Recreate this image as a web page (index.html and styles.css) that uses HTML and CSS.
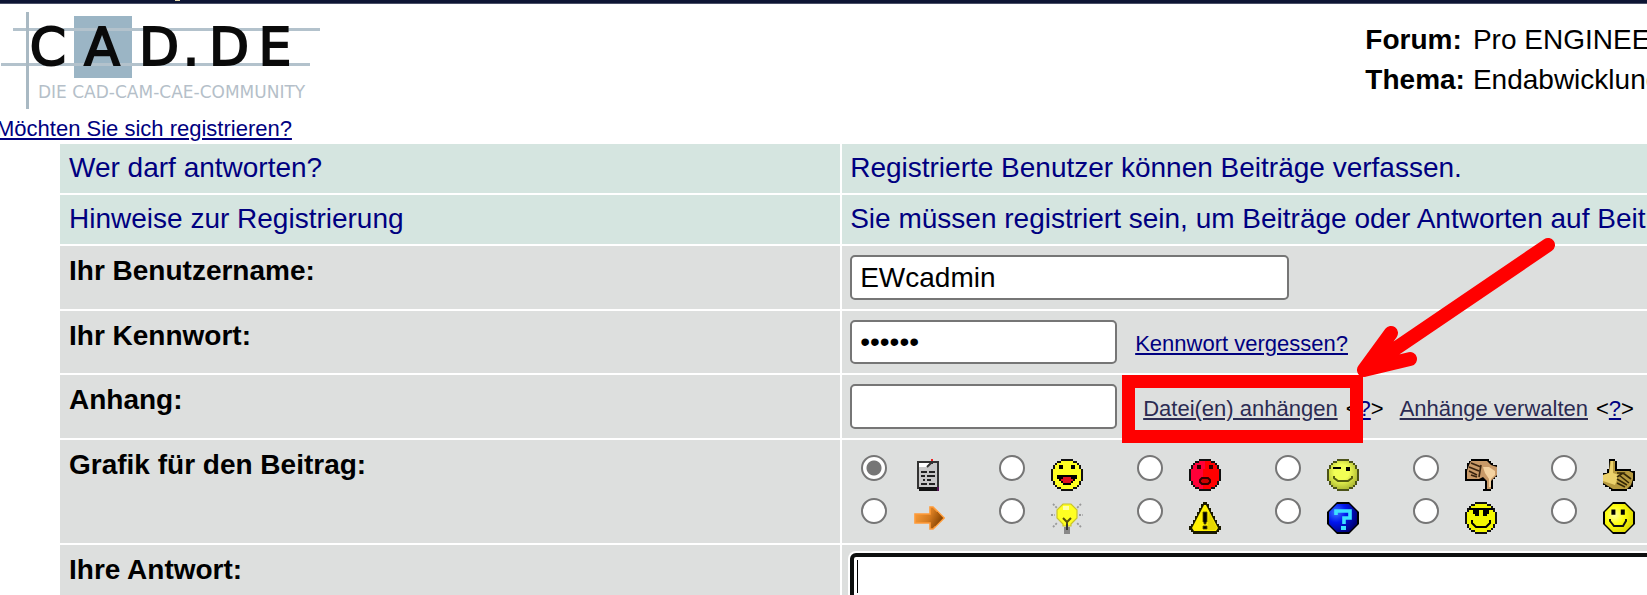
FILE: index.html
```
<!DOCTYPE html>
<html lang="de">
<head>
    <meta charset="UTF-8">
    <title>CAD.DE</title>
    <link rel="stylesheet" href="styles.css">
</head>
<body>
    <div class="topbar"></div>

    <header class="header">
        <svg class="logo" viewBox="0 0 330 112" role="img" aria-label="CAD.DE">
            <rect x="74" y="12" width="58" height="62" fill="#9bb5c5"/>
            <path d="M13 25.500H320M1 60.500H310" stroke="#b3c2cc" stroke-width="3"/>
            <path d="M27.500 8V105" stroke="#a9b9c3" stroke-width="3"/>
            <g class="logo-name">
                <text x="48" y="61">C</text>
                <text x="102" y="61">A</text>
                <text x="159" y="61">D</text>
                <text x="191" y="61">.</text>
                <text x="229" y="61">D</text>
                <text x="275" y="61">E</text>
            </g>
            <text class="logo-claim" x="38" y="94">DIE CAD-CAM-CAE-COMMUNITY</text>
        </svg>
        <dl class="thema">
            <dt>Forum:</dt>
            <dd>Pro ENGINEER</dd>
            <dt>Thema:</dt>
            <dd>Endabwicklung</dd>
        </dl>
    </header>

    <p class="registrieren"><a href="#">Möchten Sie sich registrieren?</a></p>

    <form>
    <table class="formular">
        <tr class="info">
            <td class="links">Wer darf antworten?</td>
            <td>Registrierte Benutzer können Beiträge verfassen.</td>
        </tr>
        <tr class="info">
            <td>Hinweise zur Registrierung</td>
            <td>Sie müssen registriert sein, um Beiträge oder Antworten auf Beiträge</td>
        </tr>
        <tr>
            <th><label for="benutzername">Ihr Benutzername:</label></th>
            <td><div class="zeile"><input type="text" id="benutzername" class="feld feld-breit" value="EWcadmin"></div></td>
        </tr>
        <tr>
            <th><label for="kennwort">Ihr Kennwort:</label></th>
            <td>
                <div class="zeile">
                    <input type="password" id="kennwort" class="feld feld-kennwort" value="geheim">
                    <a class="vergessen" href="#">Kennwort vergessen?</a>
                </div>
            </td>
        </tr>
        <tr>
            <th><label for="anhang">Anhang:</label></th>
            <td>
                <div class="zeile">
                    <input type="text" id="anhang" class="feld">
                    <span class="markiert">
                        <a class="datei" href="#">Datei(en) anhängen</a>
                        <span class="rahmen"></span>
                        <svg class="pfeil" viewBox="0 0 200 142">
                            <path d="M191 8L7 133M34 96L7 133L53 122" fill="none" stroke="#f00" stroke-width="14" stroke-linecap="round" stroke-linejoin="round"/>
                            <path d="M7 133L34 96L37 109L42 118L53 122z" fill="#f00"/>
                        </svg>
                    </span>
                    <span>&lt;<a href="#">?</a>&gt;</span>
                    <a class="datei verwalten" href="#">Anhänge verwalten</a>
                    <span>&lt;<a href="#">?</a>&gt;</span>
                </div>
            </td>
        </tr>
        <tr>
            <th>Grafik für den Beitrag:</th>
            <td class="grafik">
                <div class="icons">
                    <label><input type="radio" name="icon" aria-label="Notiz" checked>
                        <svg viewBox="-1 0 16 16">
                            <path d="M1 1h11v14H1z" fill="#333"/>
                            <path d="M2 2h9v12H2z" fill="#c8c8c8"/>
                            <path d="M2 2h5v2H2z" fill="#fff"/>
                            <path d="M3 6.500h3M7 6.500h3M3 8.500h2M6 8.500h4M4 10.500h1M6 10.500h2M3 12.500h3M7 12.500h3" stroke="#222"/>
                            <path d="M6 4l2-2 1 0" stroke="#333" fill="none"/>
                            <path d="M2 14h10v2H2z" fill="#111"/>
                            <path d="M8 0h1v1H8z" fill="#e22"/>
                            <path d="M11 14h1v2h-1z" fill="#515"/>
                        </svg>
                    </label>
                    <label><input type="radio" name="icon" aria-label="Lachen">
                        <svg viewBox="0 0 16 16">
                            <path class="rand" d="M5 0h6v1h2v1h1v1h1v2h1v6h-1v2h-1v1h-1v1h-2v1H5v-1H3v-1H2v-1H1v-2H0V5h1V3h1V2h1V1h2z"/>
                            <path d="M5 1h6v1h2v1h1v2h1v6h-1v2h-1v1h-2v1H5v-1H3v-1H2v-2H1V5h1V3h1V2h2z" fill="#ff2"/>
                            <path d="M4 3h2v2H4zM10 3h2v2h-2zM3 8h10v2h-1v1h-1v1h-1v1H6v-1H5v-1H4v-1H3z"/>
                            <path d="M5 10h1V9h4v1h1v1h-1v1H6v-1H5z" fill="#e01020"/>
                        </svg>
                    </label>
                    <label><input type="radio" name="icon" aria-label="Wütend">
                        <svg viewBox="0 0 16 16">
                            <path class="rand" d="M5 0h6v1h2v1h1v1h1v2h1v6h-1v2h-1v1h-1v1h-2v1H5v-1H3v-1H2v-1H1v-2H0V5h1V3h1V2h1V1h2z"/>
                            <path d="M5 1h6v1h2v1h1v2h1v6h-1v2h-1v1h-2v1H5v-1H3v-1H2v-2H1V5h1V3h1V2h2z" fill="#f00"/>
                            <path d="M5 1h3v4H7v10H5v-1H3v-1H2v-2H1V5h1V3h1V2h2z" fill="#ff0038"/>
                            <path d="M4 3h2v2H4zM10 3h2v2h-2z" fill="#300"/>
                            <path d="M6.500 9.500h3l1 1v1l-1 1h-3l-1-1v-1z" fill="#c00" stroke="#300"/>
                        </svg>
                    </label>
                    <label><input type="radio" name="icon" aria-label="Zwinkern">
                        <svg viewBox="0 0 16 16">
                            <defs>
                                <radialGradient id="zwinkern" cx=".45" cy=".4" r=".65">
                                    <stop offset=".4" stop-color="#f2ff55"/>
                                    <stop offset="1" stop-color="#a8b430"/>
                                </radialGradient>
                            </defs>
                            <path d="M5 0h6v1h2v1h1v1h1v2h1v6h-1v2h-1v1h-1v1h-2v1H5v-1H3v-1H2v-1H1v-2H0V5h1V3h1V2h1V1h2z" fill="#4c5318"/>
                            <path d="M5 1h6v1h2v1h1v2h1v6h-1v2h-1v1h-2v1H5v-1H3v-1H2v-2H1V5h1V3h1V2h2z" fill="url(#zwinkern)"/>
                            <path d="M3 4.500h4" stroke="#000"/>
                            <path d="M9.500 4h2v2h-2z"/>
                            <path d="M3.500 8.500v1l2 1.500h5l2-1.500v-1" fill="none" stroke="#545c10"/>
                        </svg>
                    </label>
                    <label><input type="radio" name="icon" aria-label="Daumen runter">
                        <svg viewBox="0 0 16 16">
                            <path d="M3 0h9v1h1v1h1v1h2v6h-1v1h-1v5h-1v1H9v-1h1v-4H0V5h1V2h1V1h1z"/>
                            <path d="M3 1h8l2 2 3 1v4l-2 2-1 1v4h-2v-4L9 9 7 10H1V6l1-3z" fill="#c99a68"/>
                            <path d="M9 4l3 0 3 2v2l-2 2v4h-1v-4l-2-3z" fill="#f4d2a0"/>
                            <path d="M3 2l5 2M2 4l5 2M2 6l4 2M3 8l3 1M8 3L7 9" stroke="#3a240f" stroke-width=".8" fill="none"/>
                        </svg>
                    </label>
                    <label><input type="radio" name="icon" aria-label="Daumen hoch">
                        <svg viewBox="0 0 16 16">
                            <path d="M3 0h3v1h1v4h7v1h2v5h-1v3h-1v1h-2v1H4v-1H3v-1H1v-1H0V7h2V5h1z"/>
                            <path d="M3.500 1H6v5h7l2 1v3l-1 3-2 2H5l-5-3V8l3-1z" fill="#b79a3e"/>
                            <path d="M4 1h1v6l3 1-2 5-6-2V8l3-1z" fill="#ecd26c"/>
                            <path d="M10 7l4 3M8 8l5 4M7 10l5 3M7 12l4 2M7 7h3l-3 2" stroke="#352806" stroke-width=".8" fill="none"/>
                        </svg>
                    </label>
                    <label><input type="radio" name="icon" aria-label="Pfeil">
                        <svg viewBox="-1 0 16 16">
                            <defs>
                                <linearGradient id="orange" x2="1" y2=".4">
                                    <stop offset="0" stop-color="#ffa23c"/>
                                    <stop offset=".6" stop-color="#d47a20"/>
                                    <stop offset="1" stop-color="#884400"/>
                                </linearGradient>
                            </defs>
                            <path d="M0 6h7.500V2.500H9L14.500 8 9 13.500H7.500V10.500H0z" fill="url(#orange)" stroke="#ff9b38" stroke-width=".8"/>
                            <path d="M10 12L14 8l-3-3" fill="none" stroke="#a85c10" stroke-width=".5"/>
                        </svg>
                    </label>
                    <label><input type="radio" name="icon" aria-label="Idee">
                        <svg viewBox="0 0 16 16">
                            <path d="M1 1l2 2M15 1l-2 2M1 12.500l2-2M15 12.500l-2-2M0 6.500h2M14 6.500h2" stroke="#999" stroke-width=".9" stroke-dasharray="1 .7"/>
                            <path d="M6 1h4l3 3v4l-3 3v1H6v-1L3 8V4z" fill="#ff2" stroke="#c9c42c" stroke-width=".6"/>
                            <path d="M6 2h3v2H6z" fill="#ffffa8"/>
                            <path d="M6 8l2 2 2-2M8 10v3" fill="none" stroke="#55500a"/>
                            <path d="M6.500 12.500h3V16h-3z" fill="#888"/>
                            <path d="M8 11v3" stroke="#333"/>
                        </svg>
                    </label>
                    <label><input type="radio" name="icon" aria-label="Achtung">
                        <svg viewBox="0 0 16 16">
                            <path d="M7 0h2v1h1v2h1v2h1v2h1v2h1v2h1v1h1v2h-1v1h-1v1H2v-1H1v-1H0v-2h1v-1h1V9h1V7h1V5h1V3h1V1h1z" fill="#1a1a00"/>
                            <path d="M7.500 1.500h1L14.500 13l-1 1.500h-11l-1-1.500z" fill="#fff200"/>
                            <path d="M10 5l4 8-1 1H9z" fill="#e6d800"/>
                            <path d="M7 5h2v5H8.500v1h-1v-1H7zM7 12h2v1.500H7z" stroke="#554d00" stroke-width=".4"/>
                        </svg>
                    </label>
                    <label><input type="radio" name="icon" aria-label="Frage">
                        <svg viewBox="0 0 16 16">
                            <defs>
                                <radialGradient id="blau" cx=".25" cy=".3" r=".8">
                                    <stop offset="0" stop-color="#3c78ff"/>
                                    <stop offset=".45" stop-color="#0016f0"/>
                                    <stop offset="1" stop-color="#000078"/>
                                </radialGradient>
                            </defs>
                            <path d="M5 0h6l5 5v6l-5 5H5l-5-5V5z"/>
                            <path d="M5 1h6l4 4v6l-4 4H5l-4-4V5z" fill="url(#blau)"/>
                            <path d="M4.500 6.500v-2h7v3.500h-3v3" fill="none" stroke="#3de0ff" stroke-width="1.800"/>
                            <path d="M7 12h2.500v2H7z" fill="#3de0ff"/>
                        </svg>
                    </label>
                    <label><input type="radio" name="icon" aria-label="Cool">
                        <svg viewBox="0 0 16 16">
                            <path class="rand" d="M5 0h6v1h2v1h1v1h1v2h1v6h-1v2h-1v1h-1v1h-2v1H5v-1H3v-1H2v-1H1v-2H0V5h1V3h1V2h1V1h2z"/>
                            <path d="M5 1h6v1h2v1h1v2h1v6h-1v2h-1v1h-2v1H5v-1H3v-1H2v-2H1V5h1V3h1V2h2z" fill="#f4f800"/>
                            <path d="M2 3h12v1h-2v2h-1v1H9V4H7v3H5V6H4V4H2z"/>
                            <path d="M3.500 9v1.500l1 1 1 1h5l1-1 1-1V9" fill="none" stroke="#000"/>
                        </svg>
                    </label>
                    <label><input type="radio" name="icon" aria-label="Lächeln">
                        <svg viewBox="0 0 16 16">
                            <defs>
                                <radialGradient id="gelb" cx=".35" cy=".4" r=".65">
                                    <stop offset="0" stop-color="#ffffa0"/>
                                    <stop offset=".5" stop-color="#ffff10"/>
                                    <stop offset="1" stop-color="#e0dc00"/>
                                </radialGradient>
                            </defs>
                            <path d="M5 0h6l5 5v6l-5 5H5l-5-5V5z"/>
                            <path d="M5 1h6l4 4v6l-4 4H5l-4-4V5z" fill="url(#gelb)"/>
                            <path d="M4.200 3.800h2v2.600h-2zM8.900 3.800h2v2.600h-2z"/>
                            <path d="M3.500 8.500v1l2 2.500h4.500l1.500-2.500v-1" fill="none" stroke="#111"/>
                        </svg>
                    </label>
                </div>
            </td>
        </tr>
        <tr>
            <th><label for="antwort">Ihre Antwort:</label></th>
            <td class="antwort"><textarea id="antwort" rows="10"></textarea></td>
        </tr>
    </table>
    </form>
</body>
</html>
```
FILE: styles.css
```
body {
    margin: 0;
    height: 100vh;
    overflow: hidden;
    background: #fff;
    color: #000;
    font-family: "Liberation Sans", Arial, sans-serif;
    font-size: 28px;
    line-height: 32px;
}

a {
    color: #000080;
}

.topbar {
    height: 3px;
    border-bottom: 1px solid #4a5068;
    background: linear-gradient(#e9dcae, #e9dcae) no-repeat 175px 0 / 5px 1px #0d1534;
}

.header {
    display: grid;
    grid-template-columns: 82.900% 1fr;
}

.logo {
    display: block;
    width: 330px;
    height: 112px;
}

.logo-name {
    font-family: "DejaVu Sans", sans-serif;
    font-size: 52px;
    text-anchor: middle;
    fill: #0a0a0a;
    stroke: #0a0a0a;
    stroke-width: 2;
}

.logo-claim {
    font-family: "DejaVu Sans", sans-serif;
    font-size: 17px;
    fill: #b5bfc9;
}

.thema {
    display: grid;
    grid-template-columns: auto 1fr;
    gap: 8px;
    align-content: start;
    min-width: 0;
    margin: 0;
    padding-top: 20px;
    white-space: nowrap;
}

.thema dt {
    font-weight: bold;
}

.thema dd {
    margin: 0;
}

.registrieren {
    margin: 1px 0 1px -4px;
    font-size: 22px;
    line-height: 24px;
}

.formular {
    width: calc(100% - 56px);
    margin-left: 58px;
    table-layout: fixed;
    border-spacing: 2px;
    white-space: nowrap;
}

.formular td,
.formular th {
    padding: 9px 8px;
    background: #dddfde;
    text-align: left;
    vertical-align: top;
}

.formular th {
    padding-left: 9px;
}

.formular .info td {
    padding: 8px 8px 9px;
    background: #d5e5e0;
    color: #000080;
}

.formular .info td:first-child {
    padding-left: 9px;
}

.formular .links {
    width: 48.150%;
}

.zeile {
    display: flex;
    align-items: baseline;
    gap: 8px;
    font-size: 22px;
    line-height: 24px;
}

.feld {
    box-sizing: border-box;
    width: 267px;
    height: 45px;
    padding: 0 8px;
    border: 2px solid #767676;
    border-radius: 5px;
    background: #fff;
    font: inherit;
    font-size: 28px;
}

.feld-breit {
    width: 439px;
}

.feld-kennwort {
    height: 44px;
}

.vergessen {
    margin-left: 10px;
}

.datei {
    color: #2b2b52;
}

.verwalten {
    margin-left: 8px;
}

.markiert {
    position: relative;
    margin-left: 18px;
}

/* roter Rahmen und Pfeil liegen über der Zeile */
.rahmen {
    position: absolute;
    top: -22px;
    left: -21px;
    width: 215px;
    height: 42px;
    border: 13px solid #f00;
    z-index: 1;
}

.pfeil {
    position: absolute;
    top: -160px;
    left: 214px;
    width: 200px;
    height: 142px;
    z-index: 1;
}

.formular .grafik {
    padding: 15px 19px 9px;
}

.icons {
    display: grid;
    grid-template-columns: repeat(6, 138px);
    row-gap: 7px;
}

.icons label {
    display: flex;
    gap: 26px;
    height: 36px;
}

.icons input {
    appearance: none;
    box-sizing: border-box;
    width: 26px;
    height: 26px;
    margin: 0;
    border: 2px solid #767676;
    border-radius: 50%;
    background: #fff;
}

.icons input:checked {
    background: radial-gradient(circle, #767676 7px, #fff 8px);
}

.icons svg {
    align-self: flex-end;
    width: 32px;
    height: 32px;
}

.rand {
    fill: #111;
}

.formular .antwort {
    padding-top: 8px;
}

.antwort textarea {
    display: block;
    box-sizing: border-box;
    width: calc(100% + 20px);
    border: 4px solid #0d100f;
    border-radius: 6px;
    box-shadow: 0 0 0 2px #fff;
    background: linear-gradient(#000, #000) no-repeat 3px 3px / 1px 33px #fff;
    font: inherit;
    resize: none;
    outline: none;
}
```
